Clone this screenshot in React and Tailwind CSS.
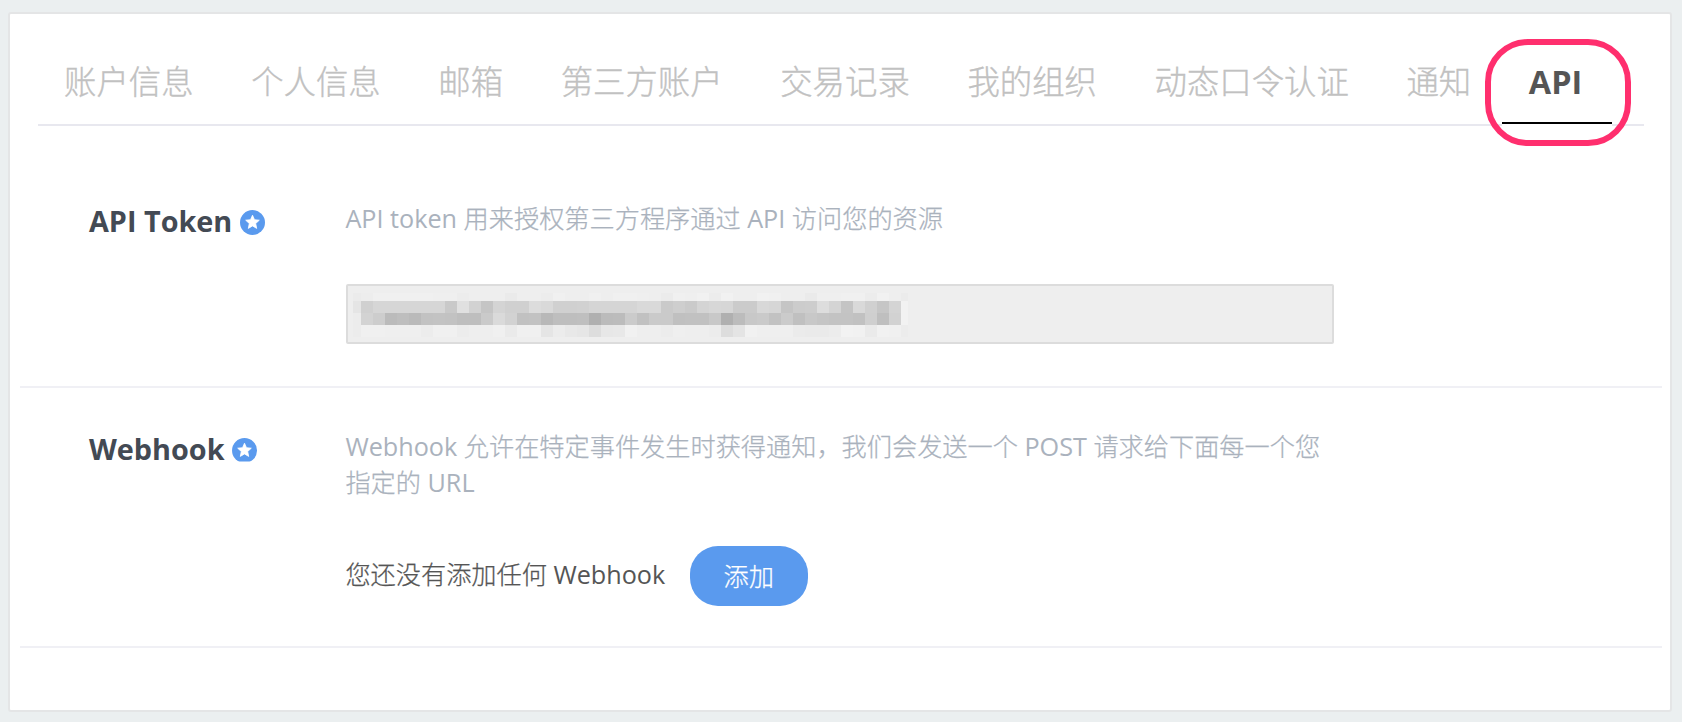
const tabs = ['账户信息', '个人信息', '邮箱', '第三方账户', '交易记录', '我的组织', '动态口令认证', '通知'];

// Grey levels of the masked token value, one string per mosaic row (two hex digits per cell).
const mosaic = [
  { h: 8, cells: 'eb edf0f0f0f0 f0efefeceeee eeeaeeee ecf0eeeef0 eef0f0efee ebf0eff1ec f1eeeef1f0 eeeeeaefef f0f0ecf1ee eb' },
  { h: 12, cells: 'e5 d0d6d6d6d6 d6d6c9e0d2 c5d4d0d0dc d9d0d0d1d5 d5d5d5d9d9 cacecad4d7 d6cbcbd8d6 c5cccdddd4 c4d9d0c6d4 f2' },
  { h: 12, cells: 'ec d3cdbbbeba c2c3c2bebe cadad2c1c2 b8bebebfb0 bbbccbc1ca cac0c1c1c8 b0bcc8cac2 cbc0c8c5c3 c3c1cfbfd2 f2' },
  { h: 12, cells: 'ec f0f0efefef ecf0f0ecee eef0eaf0f0 e5ece8e6dd e7e8f1eeee ecefeeeeec dde4f1efef efebeaeaec f2f1eaf1f0 ec' },
].map(({ h, cells }) => ({ h, cells: cells.replace(/ /g, '').match(/../g) }));

function StarBadge({ className }) {
  return (
    <svg viewBox="0 0 25 25" className={'h-[25px] w-[25px] ' + className}>
      <circle cx="12.5" cy="12.5" r="12.5" fill="#5a9aee" />
      <path
        fill="#fff"
        stroke="#fff"
        strokeWidth="0.8"
        strokeLinejoin="round"
        d="M12.5 5.2l2 4.5 4.8.5-3.6 3.3 1 4.9-4.2-2.5-4.2 2.5 1-4.9-3.6-3.3 4.8-.5z"
      />
    </svg>
  );
}

function Mosaic() {
  return (
    <div className="flex w-[555px] flex-col" aria-hidden="true">
      {mosaic.map((row, r) => (
        <div key={r} className="grid grid-cols-[8px_repeat(45,12px)_7px]" style={{ height: row.h }}>
          {row.cells.map((c, i) => (
            <span key={i} style={{ backgroundColor: `#${c}${c}${c}` }} />
          ))}
        </div>
      ))}
    </div>
  );
}

// Light Chinese text with Latin words kept at regular weight.
function Mixed({ children }) {
  return children
    .split(/( ?[A-Za-z]+(?: [A-Za-z]+)* ?)/)
    .map((part, i) => (
      <span key={i} className={i % 2 ? 'font-normal' : 'font-light [-webkit-text-stroke:0.25px]'}>
        {part}
      </span>
    ));
}

function Section({ title, className, badgeClass, children }) {
  return (
    <section className={'flex border-b-2 border-[#f0f0f5] pl-[69px] ' + className}>
      <h2 className="flex h-10 w-[257px] shrink-0 items-center text-[28.8px] leading-10 font-bold text-[#434a54]">
        {title}
        <StarBadge className={badgeClass} />
      </h2>
      <div className="w-[990px]">{children}</div>
    </section>
  );
}

export default function App() {
  return (
    <div
      lang="zh-CN"
      className="h-[722px] w-[1682px] bg-[#ebeff0] pt-3 pl-2 font-['Open_Sans','Noto_Sans_CJK_SC',sans-serif]"
    >
      <main className="h-[700px] w-[1664px] rounded-[3px] border-2 border-[#e4e5e6] bg-white pr-2 pl-[10px]">
        <nav className="mx-[18px] flex h-28 items-end gap-1 border-b-2 border-[#e8e8ef] text-[32.4px] text-[#c1c1c1]">
          {tabs.map((t) => (
            <a
              key={t}
              className="h-[90px] px-[26.8px] leading-[94px] font-light whitespace-nowrap [-webkit-text-stroke:0.35px] first:pl-[26px]"
            >
              {t}
            </a>
          ))}
          <a className="relative h-[90px] w-[110px] border-b-2 border-black pr-[3px] text-center leading-[94px] font-bold text-[#555] shadow-[0_2px_0_#fff]">
            API
            <span className="absolute top-[5px] left-[-17px] h-[107px] w-[146px] rounded-[43px] border-6 border-[#ff2f6e]" />
          </a>
        </nav>

        <Section title="API Token" className="h-[262px] pt-[75px]" badgeClass="mt-[2px] ml-2">
          <p className="-mt-[1px] -ml-[0.6px] text-[25.2px] leading-9 text-[#aab2bd]">
            <Mixed>API token 用来授权第三方程序通过 API 访问您的资源</Mixed>
          </p>
          <div className="mt-[48px] h-[60px] w-[988px] rounded-[2px] border-2 border-[#dcdcdc] bg-[#eee] pt-[7px] pl-[5px]">
            <Mosaic />
          </div>
        </Section>

        <Section
          title="Webhook"
          className="h-[260px] pt-[41px]"
          badgeClass="mt-[2px] ml-[7.5px] [clip-path:inset(0_0_1px_0)]"
        >
          <p className="-mt-[1px] -ml-[0.6px] text-[25.2px] leading-9 text-[#aab2bd]">
            <Mixed>Webhook 允许在特定事件发生时获得通知，我们会发送一个 POST 请求给下面每一个您</Mixed>
            <br />
            <Mixed>指定的 URL</Mixed>
          </p>
          <div className="mt-[46px] flex items-center text-[25.2px] text-[#555]">
            <span className="-mt-[2px] -ml-[0.6px]">
              <Mixed>您还没有添加任何 Webhook</Mixed>
            </span>
            <button className="ml-[25px] h-[60px] w-[118px] rounded-[28px] bg-[#5a9aee] pt-[2px] pr-[1px] font-light text-white [-webkit-text-stroke:0.25px]">
              添加
            </button>
          </div>
        </Section>
      </main>
    </div>
  );
}
